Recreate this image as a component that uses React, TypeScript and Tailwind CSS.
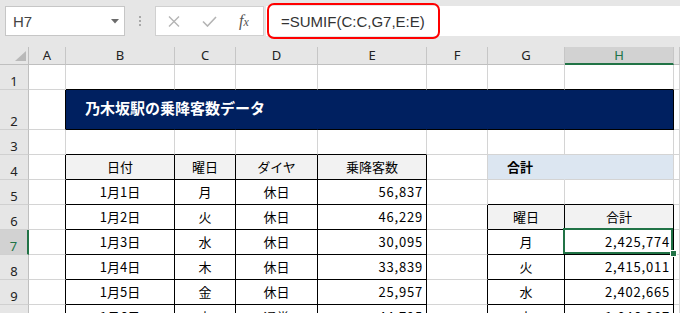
import React from "react";

type Cell = { t: string; a: "c" | "r" | "l"; b?: boolean; n?: boolean };

const COLS = ["", "A", "B", "C", "D", "E", "F", "G", "H", ""];
const ROWS = [1, 2, 3, 4, 5, 6, 7, 8, 9, 10];

const data: Record<string, Cell> = {};
const put = (r: number, c: number, t: string, a: "c" | "r" | "l", b?: boolean, n?: boolean) => {
  data[`${r}-${c}`] = { t, a, b, n };
};

put(2, 2, "乃木坂駅の乗降客数データ", "l", true);
put(4, 2, "日付", "c");
put(4, 3, "曜日", "c");
put(4, 4, "ダイヤ", "c");
put(4, 5, "乗降客数", "c");
put(4, 7, "合計", "l", true);
const rows: [string, string, string, string][] = [
  ["1月1日", "月", "休日", "56,837"],
  ["1月2日", "火", "休日", "46,229"],
  ["1月3日", "水", "休日", "30,095"],
  ["1月4日", "木", "休日", "33,839"],
  ["1月5日", "金", "休日", "25,957"],
  ["1月6日", "土", "通常", "44,795"],
];
rows.forEach((row, i) => {
  const r = 5 + i;
  put(r, 2, row[0], "c");
  put(r, 3, row[1], "c");
  put(r, 4, row[2], "c");
  put(r, 5, row[3], "r", false, true);
});
put(6, 7, "曜日", "c");
put(6, 8, "合計", "c");
const sums: [string, string][] = [
  ["月", "2,425,774"],
  ["火", "2,415,011"],
  ["水", "2,402,665"],
  ["木", "1,846,287"],
];
sums.forEach((s, i) => {
  put(7 + i, 7, s[0], "c");
  put(7 + i, 8, s[1], "r", false, true);
});

const inT1 = (r: number, c: number) => r >= 4 && r <= 10 && c >= 2 && c <= 5;
const inT2 = (r: number, c: number) => r >= 6 && r <= 10 && c >= 7 && c <= 8;
const inTitle = (r: number, c: number) => r === 2 && c >= 2 && c <= 8;
const inAny = (r: number, c: number) => inT1(r, c) || inT2(r, c) || inTitle(r, c);

function rightCls(r: number, c: number) {
  if (r === 2 && c >= 2 && c <= 7) return "border-r-[#002060]";
  if (inAny(r, c) || inAny(r, c + 1)) return "border-r-black";
  if (r === 4 && c === 7) return "border-r-[#dce6f1]";
  return "border-r-[#d4d4d4]";
}
function bottomCls(r: number, c: number) {
  if (inAny(r, c) || inAny(r + 1, c)) return "border-b-black";
  return "border-b-[#d4d4d4]";
}
function bgCls(r: number, c: number) {
  if (inTitle(r, c)) return "bg-[#002060] text-white";
  if (r === 4 && (c === 7 || c === 8)) return "bg-[#dce6f1] text-black";
  if ((r === 4 && inT1(r, c)) || (r === 6 && inT2(r, c))) return "bg-[#f2f2f2] text-black";
  return "bg-white text-black";
}
function alignCls(cell?: Cell) {
  if (!cell) return "justify-center";
  if (cell.a === "r") return "justify-end pr-[3px]";
  if (cell.a === "l") return "justify-start pl-[19px]";
  return "justify-center";
}

export default function App() {
  return (
    <div
      className="relative w-[680px] h-[313px] overflow-hidden bg-[#e6e6e6]"
      style={{ fontFamily: '"Noto Sans CJK JP", "Noto Sans", sans-serif' }}
    >
      {/* formula bar */}
      <div className="h-[47px] flex items-start pt-[6px]">
        <div className="ml-[5px] w-[120px] h-[30px] bg-white border border-[#c6c6c6] flex items-center justify-between pl-[7px] pr-[5px]">
          <span
            className="text-[15px] leading-none text-[#444]"
            style={{ fontFamily: '"Liberation Sans", Arial, sans-serif' }}
          >
            H7
          </span>
          <svg width="8" height="5" viewBox="0 0 8 5">
            <path d="M0 0 L8 0 L4 4.5 Z" fill="#6b6b6b" />
          </svg>
        </div>
        <div className="w-[30px] h-[30px] flex flex-col items-center justify-center gap-[2px]">
          <div className="w-[2px] h-[2px] bg-[#a8a8a8]" />
          <div className="w-[2px] h-[2px] bg-[#a8a8a8]" />
          <div className="w-[2px] h-[2px] bg-[#a8a8a8]" />
        </div>
        <div className="w-[109px] h-[30px] bg-white border border-[#d0d0d0] flex items-center">
          <svg className="ml-[12px]" width="12" height="11" viewBox="0 0 12 11">
            <path d="M1 0.5 L11 10.5 M11 0.5 L1 10.5" stroke="#b4b4b4" strokeWidth="1.4" fill="none" />
          </svg>
          <svg className="ml-[22px]" width="15" height="11" viewBox="0 0 15 11">
            <path d="M1 5.5 L5.5 10 L14 1" stroke="#b4b4b4" strokeWidth="1.6" fill="none" />
          </svg>
          <span
            className="ml-[22px] italic text-[16px] leading-none text-[#555]"
            style={{ fontFamily: '"Liberation Serif", "Times New Roman", serif' }}
          >
            f<span className="text-[12px]">x</span>
          </span>
        </div>
        <div className="ml-[2px] flex-1 h-[30px] bg-white flex items-center pl-[15px]">
          <span
            className="text-[15px] leading-none text-[#333]"
            style={{ fontFamily: '"Liberation Sans", Arial, sans-serif' }}
          >
            =SUMIF(C:C,G7,E:E)
          </span>
        </div>
      </div>

      {/* grid */}
      <div className="grid grid-cols-[29px_37px_109px_61px_82px_109px_61px_77px_109px_1fr] grid-rows-[18px_25px_40px_25px_25px_25px_25px_25px_25px_25px_25px]">
        {/* column header row */}
        {COLS.map((col, c) =>
          c === 0 ? (
            <div key="corner" className="relative bg-[#e6e6e6] border-r border-b border-r-[#bfbfbf] border-b-[#bfbfbf]">
              <svg className="absolute left-[15px] top-[4px]" width="11" height="10" viewBox="0 0 11 10">
                <path d="M11 0 L11 10 L0 10 Z" fill="#b9b9b9" />
              </svg>
            </div>
          ) : c === 8 ? (
            <div
              key={`c${c}`}
              className="flex items-end justify-center pb-[1px] bg-[#d2d2d2] border-r border-r-[#c6c6c6] border-b-2 border-b-[#217346] text-[#217346] text-[13px] leading-none"
              style={{ fontFamily: '"Noto Sans", sans-serif' }}
            >
              {col}
            </div>
          ) : (
            <div
              key={`c${c}`}
              className="flex items-end justify-center pb-[2px] bg-[#e6e6e6] border-r border-b border-r-[#c6c6c6] border-b-[#bfbfbf] text-[#222] text-[13px] leading-none"
              style={{ fontFamily: '"Noto Sans", sans-serif' }}
            >
              {col}
            </div>
          )
        )}
        {ROWS.map((r) =>
          COLS.map((col, c) => {
            if (c === 0) {
              return r === 7 ? (
                <div
                  key={`h${r}`}
                  className="flex items-end justify-center pb-[1px] bg-[#d2d2d2] border-r-2 border-b border-r-[#217346] border-b-[#d0d0d0] text-[#217346] text-[13px] leading-none"
                  style={{ fontFamily: '"Noto Sans", sans-serif' }}
                >
                  {r}
                </div>
              ) : (
                <div
                  key={`h${r}`}
                  className="flex items-end justify-center pb-[1px] bg-[#e6e6e6] border-r border-b border-r-[#bfbfbf] border-b-[#d0d0d0] text-[#222] text-[13px] leading-none"
                  style={{ fontFamily: '"Noto Sans", sans-serif' }}
                >
                  {r}
                </div>
              );
            }
            const cell = data[`${r}-${c}`];
            const isTitle = r === 2 && c === 2;
            const isSel = r === 7 && c === 8;
            return (
              <div
                key={`${r}-${c}`}
                className={`relative flex items-center border-r border-b ${rightCls(r, c)} ${bottomCls(r, c)} ${bgCls(r, c)} ${alignCls(cell)} ${
                  isTitle || isSel ? "z-10 overflow-visible" : "overflow-hidden"
                }`}
              >
                {cell && (
                  <span
                    className={`whitespace-nowrap leading-none ${
                      isTitle ? "text-[15px] font-bold pb-[4px]" : cell.b ? "text-[13px] font-bold pb-[2px]" : "text-[13px] pb-[2px]"
                    } ${cell.n ? "tracking-[0.8px]" : ""}`}
                  >
                    {cell.t}
                  </span>
                )}
                {isSel && (
                  <>
                    <div className="absolute -left-[2px] -top-[2px] w-[110px] h-[26px] border-2 border-[#217346]" />
                    <div className="absolute left-[105px] top-[20px] w-[7px] h-[7px] bg-[#217346] border border-white" />
                  </>
                )}
              </div>
            );
          })
        )}
      </div>

      {/* red annotation */}
      <div className="absolute left-[267px] top-[3px] w-[173px] h-[36px] border-2 border-[#f00] rounded-[7px] pointer-events-none" />
    </div>
  );
}
